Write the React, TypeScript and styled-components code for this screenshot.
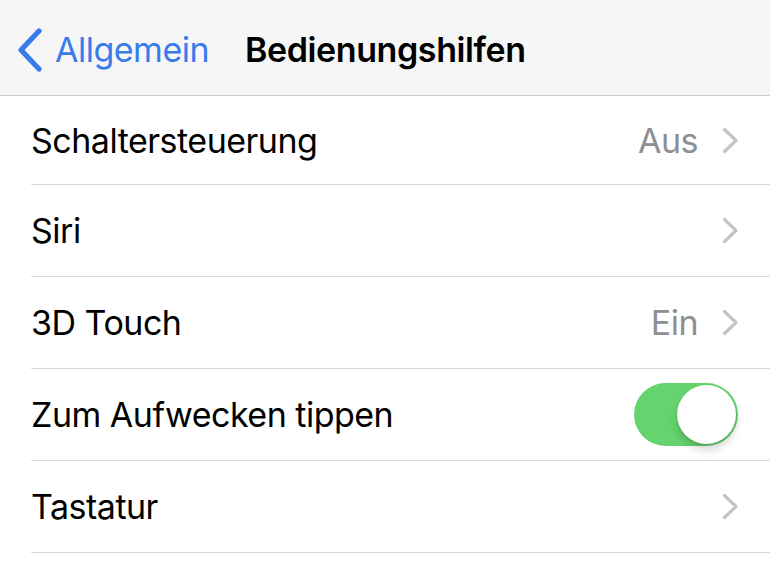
import React from "react";
import styled, { createGlobalStyle } from "styled-components";

const GlobalStyle = createGlobalStyle`
  html, body { margin: 0; padding: 0; background: #ffffff; }
  body { font-family: Inter, "Liberation Sans", Arial, sans-serif; -webkit-font-smoothing: antialiased; }
  * { box-sizing: border-box; }
`;

const Screen = styled.div`
  width: 770px;
  height: 578px;
  overflow: hidden;
  background: #ffffff;
  display: flex;
  flex-direction: column;
`;

const NavBar = styled.header`
  height: 96px;
  flex: none;
  background: #f6f6f7;
  border-bottom: 1px solid #cfcfd2;
  display: flex;
  align-items: center;
  padding: 4px 0 0 17px;
`;

const BackButton = styled.div`
  display: flex;
  align-items: center;
  gap: 12px;
  color: #3a7bec;
  font-size: 34px;
  letter-spacing: -0.5px;
`;

const Title = styled.h1`
  margin: 0 0 0 36px;
  font-size: 34px;
  font-weight: 600;
  color: #000000;
  letter-spacing: -0.4px;
`;

const List = styled.div`
  display: flex;
  flex-direction: column;
`;

const Row = styled.div<{ $first?: boolean }>`
  height: ${(p) => (p.$first ? 89 : 92)}px;
  flex: none;
  display: flex;
  align-items: center;
  margin-left: 31px;
  padding-right: 31px;
  border-bottom: 1px solid #d9d9dc;
`;

const Label = styled.span`
  flex: 1;
  font-size: 34px;
  color: #000000;
  letter-spacing: -0.5px;
`;

const Value = styled.span`
  font-size: 34px;
  color: #8e8e93;
  letter-spacing: -0.5px;
  margin-right: 24px;
`;

const ChevronIcon = styled.svg`
  width: 17px;
  height: 27px;
  flex: none;
`;

const Switch = styled.div<{ $on: boolean }>`
  width: 104px;
  height: 63px;
  border-radius: 32px;
  background: ${(p) => (p.$on ? "#65d36e" : "#e9e9ea")};
  position: relative;
  margin-right: 1px;
  flex: none;
`;

const Knob = styled.div<{ $on: boolean }>`
  position: absolute;
  top: 2px;
  left: ${(p) => (p.$on ? 43 : 2)}px;
  width: 59px;
  height: 59px;
  border-radius: 50%;
  background: #ffffff;
  box-shadow: 0 6px 8px rgba(0, 0, 0, 0.16), 0 1px 2px rgba(0, 0, 0, 0.1);
`;

const Chevron = () => (
  <ChevronIcon viewBox="0 0 17 27">
    <path d="M2.5 2.5 L14 13.5 L2.5 24.5" fill="none" stroke="#c4c4c7" strokeWidth="3.2" strokeLinecap="round" strokeLinejoin="round" />
  </ChevronIcon>
);

type Item = { label: string; value?: string; toggle?: boolean };

const items: Item[] = [
  { label: "Schaltersteuerung", value: "Aus" },
  { label: "Siri" },
  { label: "3D Touch", value: "Ein" },
  { label: "Zum Aufwecken tippen", toggle: true },
  { label: "Tastatur" },
];

export default function App() {
  return (
    <>
      <GlobalStyle />
      <Screen>
        <NavBar>
          <BackButton>
            <svg width="26" height="44" viewBox="0 0 26 44">
              <path d="M22 3 L4 22 L22 41" fill="none" stroke="#3a7bec" strokeWidth="5.2" strokeLinecap="round" strokeLinejoin="round" />
            </svg>
            Allgemein
          </BackButton>
          <Title>Bedienungshilfen</Title>
        </NavBar>
        <List>
          {items.map((it, i) => (
            <Row key={it.label} $first={i === 0}>
              <Label>{it.label}</Label>
              {it.value && <Value>{it.value}</Value>}
              {it.toggle ? (
                <Switch $on>
                  <Knob $on />
                </Switch>
              ) : (
                <Chevron />
              )}
            </Row>
          ))}
        </List>
      </Screen>
    </>
  );
}
